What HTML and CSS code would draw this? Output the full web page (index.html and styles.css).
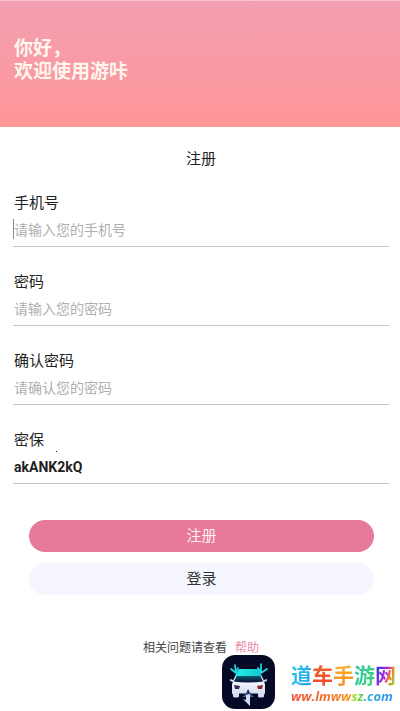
FILE: index.html
```html
<!DOCTYPE html>
<html lang="zh-CN">
<head>
<meta charset="utf-8">
<meta name="viewport" content="width=device-width, initial-scale=1">
<title>注册</title>
<link rel="stylesheet" href="styles.css">
</head>
<body>
<header class="hero">
  <p class="greeting">你好，<br>欢迎使用游咔</p>
</header>
<main class="page">
  <h1 class="title">注册</h1>
  <form class="form">
    <div class="field">
      <label for="phone">手机号</label>
      <div class="entry active"><input id="phone" type="tel" placeholder="请输入您的手机号"></div>
    </div>
    <div class="field">
      <label for="password">密码</label>
      <div class="entry"><input id="password" type="password" placeholder="请输入您的密码"></div>
    </div>
    <div class="field">
      <label for="confirm">确认密码</label>
      <div class="entry"><input id="confirm" type="password" placeholder="请确认您的密码"></div>
    </div>
    <div class="field marked">
      <label for="secret">密保</label>
      <div class="entry"><input id="secret" type="text" value="akANK2kQ"></div>
    </div>
    <div class="actions">
      <button class="button primary" type="submit">注册</button>
      <button class="button" type="button">登录</button>
    </div>
  </form>
  <p class="help">相关问题请查看 <a href="#help">帮助</a></p>
</main>
<aside class="brand">
  <svg class="brand-icon" viewBox="0 0 53 54" aria-hidden="true">
    <defs>
      <linearGradient id="roof" x1="0" y1="0" x2="1" y2="0">
        <stop offset="0" stop-color="#20f0e4"/><stop offset="1" stop-color="#14c3cb"/>
      </linearGradient>
      <linearGradient id="glass" x1="0" y1="0" x2="0" y2="1">
        <stop offset="0" stop-color="#0d5f78"/><stop offset="1" stop-color="#0b1738"/>
      </linearGradient>
      <linearGradient id="body" x1="0" y1="0" x2="0" y2="1">
        <stop offset="0" stop-color="#f5f7ff"/><stop offset="1" stop-color="#cdd6ee"/>
      </linearGradient>
      <linearGradient id="cone" x1="0" y1="0" x2="0" y2="1">
        <stop offset="0" stop-color="#0a1236"/><stop offset="1" stop-color="#53669f"/>
      </linearGradient>
    </defs>
    <rect width="53" height="54" rx="13" fill="#050a26"/>
    <path d="M15 20h23l4 7H11z" fill="url(#glass)"/>
    <path d="M17 14h19l4 7H13z" fill="url(#roof)"/>
    <path d="M14 21l-3 6M39 21l3 6" stroke="#dff4fb" stroke-width="1.2"/>
    <path d="M11 26.500q15 2 31 0l1 3v8q0 2-1 2v2q0 1-2 1h-2q-2 0-2-1v-3H17v3q0 1-2 1h-2q-2 0-2-1v-2q-1 0-1-2v-8z" fill="url(#body)"/>
    <path d="M8 24l3 1v2l-3-1zM45 24l-3 1v2l3-1z" fill="#cdd9ef"/>
    <path d="M12 30l6 1-1 3h-4z" fill="#3b2c4b"/>
    <path d="M41 30l-6 1 1 3h4z" fill="#8c2435"/>
    <path d="M26 34q3 6 6 8H20q4-2 6-8z" fill="url(#cone)"/>
    <path d="M24 40l4-1v12l-3-3-4-4 3 1z" fill="#d3dcf3"/>
    <path d="M13 10l1 8M9 14l5 4 2-5M39 9v9M36 13l3 5 6-4" fill="none" stroke="#21dbe4" stroke-width="1.7" stroke-linecap="round" stroke-linejoin="round"/>
  </svg>
  <div class="brand-text">
    <div class="brand-name"><span class="cyan">道</span><span class="red">车</span><span class="gold">手</span><span class="green">游</span><span class="rainbow">网</span></div>
    <div class="brand-url"><span class="warm">ww.lmww</span><span class="lime">sz</span><span class="blue">.com</span></div>
  </div>
</aside>
</body>
</html>
```
FILE: styles.css
```css
* { box-sizing: border-box; }

body {
  margin: 0;
  min-height: 100vh;
  background: #fff;
  color: #222;
  font: 15px/22px Roboto, "Noto Sans CJK SC", sans-serif;
}

p, h1 { margin: 0; }

.hero {
  padding: 36px 14px 44px;
  background: linear-gradient(#f39fb2, #ff9697);
  border-top: 1px solid #fbc4cf;
}

.greeting {
  color: #fff6ee;
  font-size: 19px;
  font-weight: 700;
  line-height: 23px;
}

.page { padding: 21px 11px 0 13px; }

.title {
  text-align: center;
  font-size: 15px;
  font-weight: 400;
}

.form { padding-top: 22px; }

.field {
  display: flex;
  flex-direction: column;
  margin-bottom: 24px;
}

.field label { padding-left: 1px; }

/* Small speck beside the security code label */
.marked { position: relative; }

.marked::after {
  content: "";
  position: absolute;
  left: 43px;
  top: 22px;
  width: 1px;
  height: 1px;
  background: #222;
}

.entry {
  display: flex;
  margin-top: 4px;
  padding-bottom: 5px;
  border-bottom: 1px solid #c4c4c4;
}

.active::before {
  content: "";
  width: 1px;
  height: 20px;
  margin: 1px -1px 0 0;
  background: #888;
}

input {
  flex: 1;
  min-width: 0;
  height: 23px;
  padding: 0 0 0 1px;
  border: 0;
  outline: 0;
  background: none;
  color: #222;
  font: inherit;
  font-size: 14px;
  font-weight: 700;
}

input::placeholder {
  color: #b0b0b0;
  font-weight: 400;
  opacity: 1;
}

.actions {
  display: grid;
  gap: 11px;
  padding: 12px 15px 0 16px;
}

.button {
  height: 32px;
  padding: 0;
  border: 0;
  border-radius: 16px;
  background: #f5f6fe;
  color: #333;
  font: inherit;
}

.primary {
  background: #e67a98;
  color: #fff0f4;
}

.help {
  padding-top: 42px;
  text-align: center;
  color: #444;
  font-size: 12px;
}

.help a {
  margin-left: 5px;
  color: #ec8ba6;
  text-decoration: none;
}

.brand {
  position: fixed;
  right: 4px;
  bottom: 2px;
  display: flex;
  align-items: center;
  gap: 16px;
}

.brand-icon { width: 53px; height: 54px; }

.brand-text { padding-top: 4px; }

.brand-name {
  font-size: 21px;
  font-weight: 700;
  line-height: 24px;
}

.brand-url {
  font: italic 700 13px/16px "Open Sans", sans-serif;
}

.brand-name span, .brand-url span {
  background-clip: text;
  color: transparent;
}

.cyan { background-image: linear-gradient(120deg, #22d0ea, #2b9df5); }
.red { background-image: linear-gradient(#f0622c, #f5482a); }
.gold { background-image: linear-gradient(#f9b233, #f58a1f); }
.green { background-image: linear-gradient(120deg, #2cc4b0, #3dd46a); }
.rainbow { background-image: linear-gradient(110deg, #4a35e0 15%, #b52be0 50%, #ff7a1a 65%, #9acb3a 85%); }
.warm { background-image: linear-gradient(90deg, #f0503a, #f0702a 60%, #f59a1f); }
.lime { background-image: linear-gradient(90deg, #b5dc2c, #55cc4a); }
.blue { background-image: linear-gradient(90deg, #27b7d8, #2f8ef2); }
```
